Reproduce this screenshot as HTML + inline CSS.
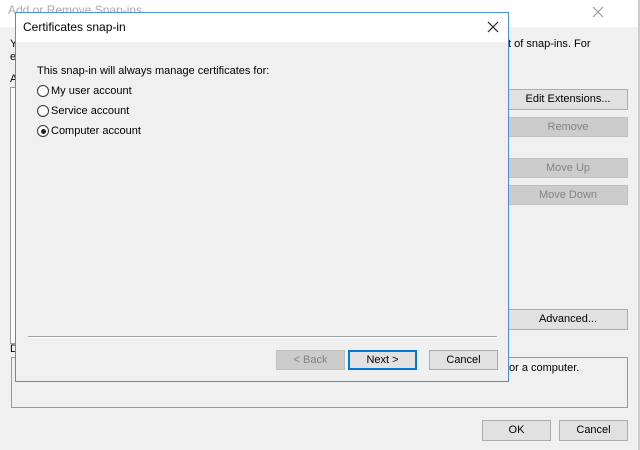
<!DOCTYPE html>
<html><head><style>
body{margin:0;width:640px;height:450px;background:#f0f0f0;position:relative;overflow:hidden;font-family:"Liberation Sans",sans-serif;font-size:11px;color:#000}
.a{position:absolute}
.btn{position:absolute;background:#e1e1e1;border:1px solid #adadad;box-sizing:border-box;text-align:center;font-size:11px;line-height:18px}
.dis{background:#cccccc;border-color:#bfbfbf;color:#838383}
.radio{position:absolute;width:12px;height:12px;border:1px solid #333;border-radius:50%;background:#fff;box-sizing:border-box}
</style></head><body>
<div class="a" style="left:0;top:0;width:640px;height:27px;background:#fff"></div>
<div class="a" style="left:8px;top:3px;color:#aaa;font-size:12px">Add or Remove Snap-ins</div>
<svg class="a" style="left:592px;top:6px" width="12" height="12"><path d="M1 1L11 11M11 1L1 11" stroke="#999" stroke-width="1.1"/></svg>
<div class="a" style="left:638px;top:0;width:2px;height:450px;background:#ccc"></div>
<div class="a" style="left:10px;top:38px">Y</div>
<div class="a" style="left:10px;top:51px">e</div>
<div class="a" style="left:10px;top:73px">A</div>
<div class="a" style="left:10px;top:87px;width:6px;height:255px;background:#fff;border:1px solid #999;border-right:none"></div>
<div class="a" style="left:10px;top:343px">D</div>
<div class="a" style="left:508px;top:38px">t of snap-ins. For</div>
<div class="btn" style="left:508px;top:89px;width:120px;height:21px">Edit Extensions...</div>
<div class="btn dis" style="left:508px;top:117px;width:120px;height:20px">Remove</div>
<div class="btn dis" style="left:508px;top:158px;width:120px;height:20px">Move Up</div>
<div class="btn dis" style="left:508px;top:185px;width:120px;height:20px">Move Down</div>
<div class="btn" style="left:508px;top:309px;width:120px;height:21px">Advanced...</div>
<div class="a" style="left:11px;top:357px;width:617px;height:51px;border:1px solid #999;box-sizing:border-box;background:#f0f0f0"></div>
<div class="a" style="left:509px;top:362px">or a computer.</div>
<div class="btn" style="left:482px;top:420px;width:69px;height:21px">OK</div>
<div class="btn" style="left:559px;top:420px;width:69px;height:21px">Cancel</div>

<div class="a" style="left:15px;top:12px;width:494px;height:370px;border:1px solid #4a90d9;box-sizing:border-box;background:#f0f0f0">
 <div class="a" style="left:0;top:0;width:492px;height:29px;background:#fff"></div>
 <div class="a" style="left:7px;top:7px;font-size:12px">Certificates snap-in</div>
 <svg class="a" style="left:471px;top:8px" width="12" height="12"><path d="M1 1L11 11M11 1L1 11" stroke="#222" stroke-width="1.2"/></svg>
 <div class="a" style="left:21px;top:52px">This snap-in will always manage certificates for:</div>
 <div class="radio" style="left:21px;top:72px"></div><div class="a" style="left:35px;top:72px">My user account</div>
 <div class="radio" style="left:21px;top:92px"></div><div class="a" style="left:35px;top:92px">Service account</div>
 <div class="radio" style="left:21px;top:112px"><div class="a" style="left:2.5px;top:2.5px;width:5px;height:5px;border-radius:50%;background:#222"></div></div><div class="a" style="left:35px;top:112px">Computer account</div>
 <div class="a" style="left:12px;top:323px;width:469px;height:1px;background:#a0a0a0"></div>
 <div class="a" style="left:12px;top:324px;width:469px;height:1px;background:#fff"></div>
 <div class="btn dis" style="left:260px;top:337px;width:69px;height:20px">&lt; Back</div>
 <div class="btn" style="left:332px;top:337px;width:69px;height:20px;border:2px solid #0078d7;line-height:16px">Next &gt;</div>
 <div class="btn" style="left:413px;top:337px;width:69px;height:20px">Cancel</div>
</div>
</body></html>
